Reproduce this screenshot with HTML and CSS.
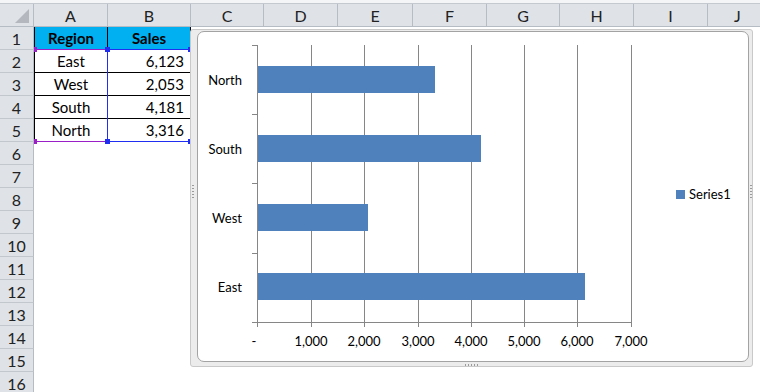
FILE: index.html
```html
<!DOCTYPE html>
<html lang="en">
<head>
    <meta charset="UTF-8">
    <title>Sheet1 - Bar chart</title>
    <link rel="stylesheet" href="styles.css">
</head>
<body>
    <div class="sheet">
        <div class="top-strip"></div>

        <div class="grid">
            <!-- column headers -->
            <div class="corner"><span class="corner-tri"></span></div>
            <div class="col-head">A</div>
            <div class="col-head">B</div>
            <div class="col-head">C</div>
            <div class="col-head">D</div>
            <div class="col-head">E</div>
            <div class="col-head">F</div>
            <div class="col-head">G</div>
            <div class="col-head">H</div>
            <div class="col-head">I</div>
            <div class="col-head">J</div>

            <!-- row 1 -->
            <div class="row-head">1</div>
            <div class="cell tbl tbl-a head-fill">Region</div>
            <div class="cell tbl head-fill">Sales</div>
            <div class="cell rest"></div>

            <!-- rows 2-5 -->
            <div class="row-head">2</div>
            <div class="cell tbl tbl-a center">East</div>
            <div class="cell tbl num">6,123</div>
            <div class="cell rest"></div>

            <div class="row-head">3</div>
            <div class="cell tbl tbl-a center">West</div>
            <div class="cell tbl num">2,053</div>
            <div class="cell rest"></div>

            <div class="row-head">4</div>
            <div class="cell tbl tbl-a center">South</div>
            <div class="cell tbl num">4,181</div>
            <div class="cell rest"></div>

            <div class="row-head">5</div>
            <div class="cell tbl tbl-a center">North</div>
            <div class="cell tbl num">3,316</div>
            <div class="cell rest"></div>

            <!-- empty rows -->
            <div class="row-head">6</div><div class="cell empty"></div>
            <div class="row-head">7</div><div class="cell empty"></div>
            <div class="row-head">8</div><div class="cell empty"></div>
            <div class="row-head">9</div><div class="cell empty"></div>
            <div class="row-head">10</div><div class="cell empty"></div>
            <div class="row-head">11</div><div class="cell empty"></div>
            <div class="row-head">12</div><div class="cell empty"></div>
            <div class="row-head">13</div><div class="cell empty"></div>
            <div class="row-head">14</div><div class="cell empty"></div>
            <div class="row-head">15</div><div class="cell empty"></div>
            <div class="row-head">16</div><div class="cell empty"></div>
        </div>

        <!-- chart source range highlights -->
        <div class="hl-cat"></div>
        <div class="hl-val"></div>
        <span class="handle purple h-tl"></span>
        <span class="handle purple h-bl"></span>
        <span class="handle blue h-tm"></span>
        <span class="handle blue h-tr"></span>
        <span class="handle blue h-bm"></span>
        <span class="handle blue h-br"></span>

        <!-- chart object -->
        <div class="chart">
            <span class="grip grip-left"></span>
            <span class="grip grip-right"></span>
            <span class="grip grip-bottom"></span>
            <div class="chart-inner">
                <svg class="plot" width="550" height="329" viewBox="198 32 550 329">
                    <g class="grid-lines" stroke="#868686" stroke-width="1">
                        <line x1="311.5" y1="45" x2="311.5" y2="327"/>
                        <line x1="364.5" y1="45" x2="364.5" y2="327"/>
                        <line x1="418.5" y1="45" x2="418.5" y2="327"/>
                        <line x1="471.5" y1="45" x2="471.5" y2="327"/>
                        <line x1="524.5" y1="45" x2="524.5" y2="327"/>
                        <line x1="577.5" y1="45" x2="577.5" y2="327"/>
                        <line x1="631.5" y1="45" x2="631.5" y2="327"/>
                        <!-- axes -->
                        <line x1="257.5" y1="45" x2="257.5" y2="327"/>
                        <line x1="252" y1="322.5" x2="632" y2="322.5"/>
                        <!-- category ticks -->
                        <line x1="252" y1="45.5" x2="257" y2="45.5"/>
                        <line x1="252" y1="114.5" x2="257" y2="114.5"/>
                        <line x1="252" y1="183.5" x2="257" y2="183.5"/>
                        <line x1="252" y1="253.5" x2="257" y2="253.5"/>
                    </g>

                    <g fill="#4f81bd">
                        <rect x="258" y="66" width="177" height="27"/>
                        <rect x="258" y="135" width="223" height="27"/>
                        <rect x="258" y="204" width="110" height="27"/>
                        <rect x="258" y="273" width="327" height="27"/>
                    </g>

                    <g class="cat-labels" text-anchor="end">
                        <text x="242" y="85">North</text>
                        <text x="242" y="154">South</text>
                        <text x="242" y="223">West</text>
                        <text x="242" y="292">East</text>
                    </g>

                    <g class="val-labels" text-anchor="middle">
                        <text x="254" y="346">-</text>
                        <text x="311" y="346">1,000</text>
                        <text x="364" y="346">2,000</text>
                        <text x="418" y="346">3,000</text>
                        <text x="471" y="346">4,000</text>
                        <text x="524" y="346">5,000</text>
                        <text x="577" y="346">6,000</text>
                        <text x="631" y="346">7,000</text>
                    </g>

                    <rect x="676" y="190" width="9" height="9" fill="#4f81bd"/>
                    <text class="legend" x="689" y="199">Series1</text>
                </svg>
            </div>
        </div>
    </div>
</body>
</html>
```

FILE: styles.css
```css
body {
    margin: 0;
    background: #ffffff;
    font-family: Lato, "Open Sans", sans-serif;
    overflow: hidden;
}

.sheet {
    position: relative;
    width: 760px;
    height: 392px;
    overflow: hidden;
}

.top-strip {
    height: 3px;
    background: #f4f5f7;
    border-bottom: 1px solid #c4c9d0;
}

.grid {
    display: grid;
    grid-template-columns: 34px 74px 83px 73px 74px 75px 74px 73px 74px 74px 60px;
    grid-auto-rows: 23px;
    font-size: 15px;
    color: #000;
}

.corner, .col-head, .row-head {
    background: #dfe3e8;
    border-right: 1px solid #b6bcc4;
    border-bottom: 1px solid #b6bcc4;
    box-sizing: border-box;
    color: #222;
    font-size: 16px;
}

.corner {
    position: relative;
}

.corner-tri {
    position: absolute;
    right: 4px;
    bottom: 3px;
    width: 0;
    height: 0;
    border-left: 14px solid transparent;
    border-bottom: 14px solid #b4b8be;
}

.col-head, .row-head {
    display: flex;
    align-items: center;
    justify-content: center;
}

.row-head {
    border-bottom-color: #c2c7ce;
}

.cell {
    box-sizing: border-box;
    display: flex;
    align-items: center;
    padding: 0 3px;
}

.tbl {
    border-right: 1px solid #000;
    border-bottom: 1px solid #000;
}

.tbl-a {
    border-left: 1px solid #000;
}

.head-fill {
    background: #00b0f0;
    font-weight: bold;
    justify-content: center;
}

.center {
    justify-content: center;
}

.num {
    justify-content: flex-end;
    padding-right: 6px;
}

.rest {
    grid-column: 4 / 12;
}

.empty {
    grid-column: 2 / 12;
}

/* source range highlight */
.hl-cat {
    position: absolute;
    left: 34px;
    top: 49px;
    width: 73px;
    height: 91px;
    border-top: 1px solid #9b1fc6;
    border-bottom: 1px solid #9b1fc6;
}

.hl-val {
    position: absolute;
    left: 107px;
    top: 49px;
    width: 82px;
    height: 91px;
    border: 1px solid #1f2ef0;
}

.handle {
    position: absolute;
    width: 5px;
    height: 5px;
}

.handle.purple { background: #9b1fc6; width: 3px; }
.handle.blue { background: #1f2ef0; }

.h-tl { left: 34px; top: 47px; }
.h-bl { left: 34px; top: 139px; }
.h-tm { left: 105px; top: 47px; }
.h-tr { left: 188px; top: 47px; }
.h-bm { left: 105px; top: 139px; }
.h-br { left: 188px; top: 139px; }

/* chart object floats over the sheet */
.chart {
    position: absolute;
    left: 190px;
    top: 29px;
    width: 563px;
    height: 338px;
    box-sizing: border-box;
    padding: 1px 3px 4px 6px;
    background: #ececec;
    border: 1px solid #c9c9c9;
    border-radius: 3px;
}

.chart-inner {
    width: 552px;
    height: 331px;
    box-sizing: border-box;
    background: #ffffff;
    border: 1px solid #a3a3a3;
    border-radius: 7px;
    overflow: hidden;
}

.grip {
    position: absolute;
}

.grip-left, .grip-right {
    width: 2px;
    height: 14px;
    top: 155px;
    background: repeating-linear-gradient(to bottom, #9a9a9a 0 1px, transparent 1px 3px);
}

.grip-left { left: 1px; }
.grip-right { right: 0; }

.grip-bottom {
    height: 2px;
    width: 14px;
    left: 274px;
    bottom: 0;
    background: repeating-linear-gradient(to right, #9a9a9a 0 1px, transparent 1px 3px);
}

.plot {
    display: block;
}

.plot text {
    font-family: Lato, "Open Sans", sans-serif;
    font-size: 13px;
    fill: #000;
}
```
